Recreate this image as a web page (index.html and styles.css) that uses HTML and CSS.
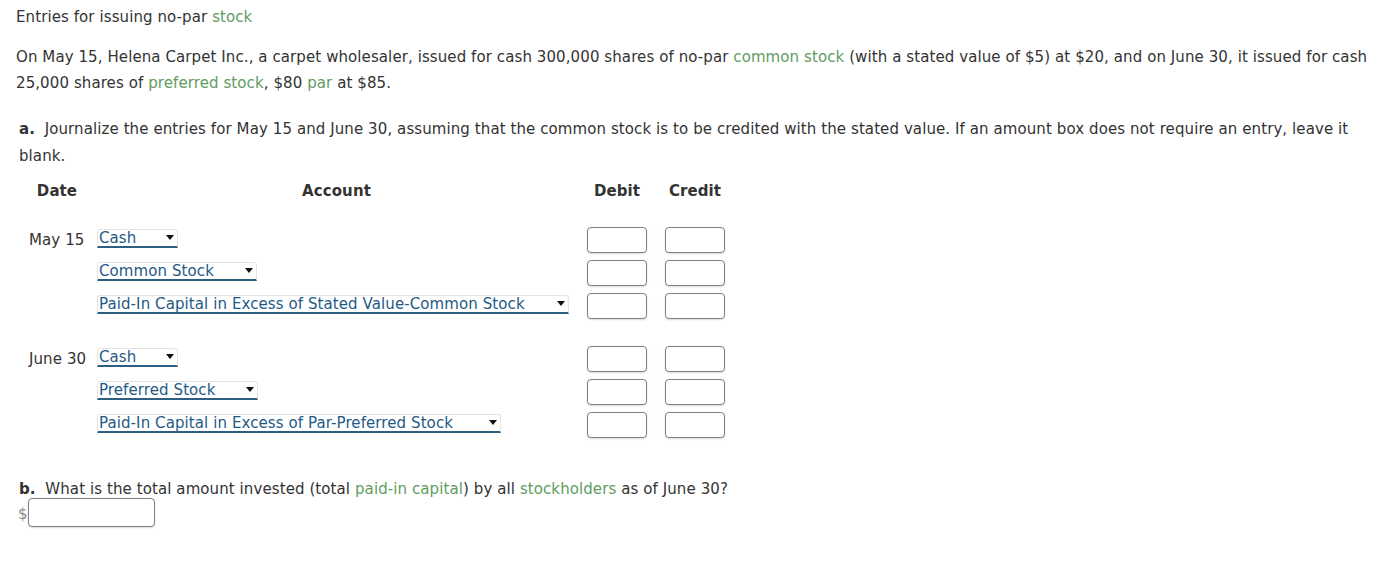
FILE: index.html
```html
<!DOCTYPE html>
<html lang="en">

<head>
    <meta charset="UTF-8">
    <title>Entries for issuing no-par stock</title>
    <link rel="stylesheet" href="styles.css">
</head>

<body>
    <div class="page">
        <p class="title">Entries for issuing no-par <span class="term">stock</span></p>

        <p class="problem">On May 15, Helena Carpet Inc., a carpet wholesaler, issued for cash 300,000 shares of no-par <span class="term">common stock</span> (with a stated value of $5) at $20, and on June 30, it issued for cash 25,000 shares of <span class="term">preferred stock</span>, $80 <span class="term">par</span> at $85.</p>

        <p class="part"><b>a.</b>&nbsp; Journalize the entries for May 15 and June 30, assuming that the common stock is to be credited with the stated value. If an amount box does not require an entry, leave it blank.</p>

        <div class="journal">
            <div class="journal-head">
                <span>Date</span>
                <span>Account</span>
                <span>Debit</span>
                <span>Credit</span>
            </div>

            <div class="entry">
                <div class="entry-row">
                    <span class="date">May 15</span>
                    <span class="account"><span class="dropdown w-cash">Cash<i class="caret"></i></span></span>
                    <span class="amount"><span class="box"></span></span>
                    <span class="amount"><span class="box"></span></span>
                </div>
                <div class="entry-row">
                    <span class="date"></span>
                    <span class="account"><span class="dropdown w-common">Common Stock<i class="caret"></i></span></span>
                    <span class="amount"><span class="box"></span></span>
                    <span class="amount"><span class="box"></span></span>
                </div>
                <div class="entry-row">
                    <span class="date"></span>
                    <span class="account"><span class="dropdown w-stated">Paid-In Capital in Excess of Stated Value-Common Stock<i class="caret"></i></span></span>
                    <span class="amount"><span class="box"></span></span>
                    <span class="amount"><span class="box"></span></span>
                </div>
            </div>

            <div class="entry">
                <div class="entry-row">
                    <span class="date">June 30</span>
                    <span class="account"><span class="dropdown w-cash">Cash<i class="caret"></i></span></span>
                    <span class="amount"><span class="box"></span></span>
                    <span class="amount"><span class="box"></span></span>
                </div>
                <div class="entry-row">
                    <span class="date"></span>
                    <span class="account"><span class="dropdown w-preferred">Preferred Stock<i class="caret"></i></span></span>
                    <span class="amount"><span class="box"></span></span>
                    <span class="amount"><span class="box"></span></span>
                </div>
                <div class="entry-row">
                    <span class="date"></span>
                    <span class="account"><span class="dropdown w-par">Paid-In Capital in Excess of Par-Preferred Stock<i class="caret"></i></span></span>
                    <span class="amount"><span class="box"></span></span>
                    <span class="amount"><span class="box"></span></span>
                </div>
            </div>
        </div>

        <p class="part part-b"><b>b.</b>&nbsp; What is the total amount invested (total <span class="term">paid-in capital</span>) by all <span class="term">stockholders</span> as of June 30?</p>
        <div class="total">
            <span class="dollar">$</span><span class="box box-total"></span>
        </div>
    </div>
</body>

</html>
```

FILE: styles.css
```css
:root {
    --text-color: #333333;
    --term-color: #5f9c5f;
    --select-color: #1f5a85;
    --select-line: #2d5f80;
    --box-border: #808080;
}

* {
    margin: 0;
    padding: 0;
    box-sizing: border-box;
}

body {
    font-family: "DejaVu Sans", Verdana, sans-serif;
    font-size: 15px;
    letter-spacing: 0.09px;
    color: var(--text-color);
    background: #ffffff;
}

.page {
    padding: 7px 8px 7px 16px;
}

.title {
    line-height: 20px;
}

.term {
    color: var(--term-color);
}

.problem {
    margin-top: 17px;
    line-height: 26px;
}

.part {
    margin-top: 20px;
    padding-left: 3px;
    padding-right: 14px;
    line-height: 27px;
}

.part b {
    font-weight: bold;
}

.journal {
    margin-top: 11px;
    padding-left: 3px;
}

.journal-head,
.entry-row {
    display: grid;
    grid-template-columns: 76px 483px 78px 78px;
    align-items: center;
}

.journal-head {
    line-height: 20px;
    font-weight: bold;
    text-align: center;
    margin-bottom: 26px;
}

.entry {
    display: flex;
    flex-direction: column;
    gap: 7px;
}

.entry + .entry {
    margin-top: 27px;
}

.entry-row {
    height: 26px;
}

.date {
    padding-left: 10px;
}

.account {
    padding-left: 2px;
    display: flex;
    align-items: center;
    margin-top: -4px;
}

.dropdown {
    display: inline-flex;
    align-items: center;
    height: 19px;
    padding-left: 1px;
    padding-right: 3px;
    color: var(--select-color);
    border: 1px solid #e4e4e4;
    border-bottom: 2px solid var(--select-line);
    border-radius: 3px 3px 0 0;
    line-height: 16px;
}

.caret {
    margin-left: auto;
    width: 0;
    height: 0;
    border-left: 4px solid transparent;
    border-right: 4px solid transparent;
    border-top: 5px solid #111111;
}

.w-cash { width: 81px; }
.w-common { width: 160px; }
.w-stated { width: 472px; }
.w-preferred { width: 161px; }
.w-par { width: 404px; }

.amount {
    display: flex;
    justify-content: center;
}

.box {
    display: block;
    width: 60px;
    height: 26px;
    border: 1.5px solid var(--box-border);
    border-radius: 4px;
    background: #ffffff;
    box-shadow: 0 1px 2px rgba(0, 0, 0, 0.15);
}

.part-b {
    margin-top: 38px;
}

.total {
    display: flex;
    align-items: center;
    padding-left: 2px;
    margin-top: -5px;
}

.dollar {
    color: #8a8a8a;
    margin-top: 2px;
}

.box-total {
    width: 127px;
    height: 29px;
}
```
